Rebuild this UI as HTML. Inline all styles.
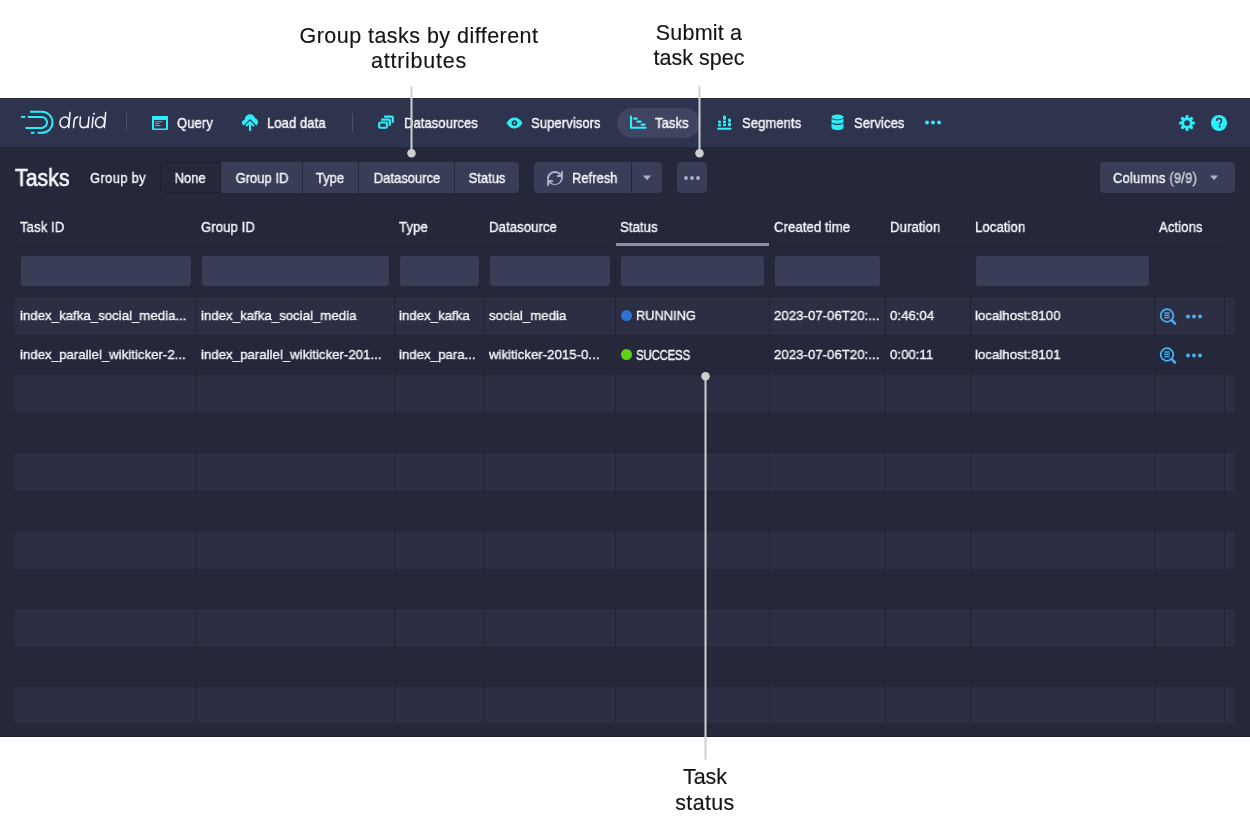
<!DOCTYPE html>
<html><head><meta charset="utf-8"><title>Druid Tasks</title>
<style>
html,body{margin:0;padding:0;}
body{width:1250px;height:840px;overflow:hidden;background:#ffffff;position:relative;font-family:"Liberation Sans", sans-serif;}
.t{position:absolute;white-space:nowrap;font-family:"Liberation Sans", sans-serif;will-change:transform;}
.r{position:absolute;display:block;}
</style></head><body>
<div class="r" style="left:0px;top:98px;width:1250px;height:639px;background:#25283b;"></div><div class="r" style="left:0px;top:98px;width:1250px;height:49px;background:#2f344e;"></div><div class="r" style="left:0px;top:98px;width:1250px;height:1px;background:#24283d;"></div><div class="r" style="left:0px;top:736px;width:1250px;height:1px;background:#1d2030;"></div><svg class="r" style="left:0px;top:0px;" width="60" height="140" viewBox="0 0 60 140"><g fill="none" stroke="#2ceefb" stroke-width="2" stroke-linecap="butt">
<path d="M30 111.8 H42 A10.5 10.5 0 0 1 42 132.8 H37.5"/>
<path d="M31 132.8 H34.5"/>
<path d="M27.8 116.9 H41.5 A5.5 5.5 0 0 1 41.5 127.9 H25.5"/>
<path d="M21 116.9 H25.3"/>
</g></svg><svg class="r" style="left:0px;top:0px;" width="120" height="140" viewBox="0 0 120 140"><g fill="none" stroke="#f0f2f5" stroke-width="1.55" stroke-linecap="round" transform="translate(9.9,0) skewX(-5)">
<ellipse cx="65.4" cy="122.3" rx="4.6" ry="5.3"/>
<path d="M70 112.6 V127.6"/>
<path d="M74.8 127.6 V121.5 Q74.8 117.1 78.2 117.1"/>
<path d="M80.8 117 V123 Q80.8 127.6 85 127.6 Q89.3 127.6 89.3 123 V117 M89.3 122 V127.6"/>
<path d="M93.4 117 V127.6"/>
<ellipse cx="100.9" cy="122.3" rx="4.6" ry="5.3"/>
<path d="M105.6 112.6 V127.6"/>
</g>
<circle cx="94" cy="113.8" r="1.05" fill="#f0f2f5"/></svg><div class="r" style="left:126px;top:113px;width:1px;height:19px;background:#4a4f69;"></div><div class="r" style="left:352px;top:113px;width:1px;height:19px;background:#4a4f69;"></div><div class="r" style="left:617px;top:107.5px;width:83px;height:30.0px;background:#3f4461;border-radius:15px;"></div><div class="t" style="top:115.50px;font-size:14.30px;line-height:14.30px;color:#f5f8fa;font-weight:400;left:177.00px;transform-origin:0 0;transform:scaleX(0.9091);letter-spacing:0.1px;-webkit-text-stroke:0.4px #f5f8fa;">Query</div><div class="t" style="top:115.50px;font-size:14.30px;line-height:14.30px;color:#f5f8fa;font-weight:400;left:267.00px;transform-origin:0 0;transform:scaleX(0.9091);letter-spacing:0.1px;-webkit-text-stroke:0.4px #f5f8fa;">Load data</div><div class="t" style="top:115.50px;font-size:14.30px;line-height:14.30px;color:#f5f8fa;font-weight:400;left:403.60px;transform-origin:0 0;transform:scaleX(0.9091);letter-spacing:0.1px;-webkit-text-stroke:0.4px #f5f8fa;">Datasources</div><div class="t" style="top:115.50px;font-size:14.30px;line-height:14.30px;color:#f5f8fa;font-weight:400;left:531.00px;transform-origin:0 0;transform:scaleX(0.9091);letter-spacing:0.1px;-webkit-text-stroke:0.4px #f5f8fa;">Supervisors</div><div class="t" style="top:115.50px;font-size:14.30px;line-height:14.30px;color:#f5f8fa;font-weight:400;left:655.00px;transform-origin:0 0;transform:scaleX(0.9091);letter-spacing:0.1px;-webkit-text-stroke:0.4px #f5f8fa;">Tasks</div><div class="t" style="top:115.50px;font-size:14.30px;line-height:14.30px;color:#f5f8fa;font-weight:400;left:741.60px;transform-origin:0 0;transform:scaleX(0.9091);letter-spacing:0.1px;-webkit-text-stroke:0.4px #f5f8fa;">Segments</div><div class="t" style="top:115.50px;font-size:14.30px;line-height:14.30px;color:#f5f8fa;font-weight:400;left:853.80px;transform-origin:0 0;transform:scaleX(0.9091);letter-spacing:0.1px;-webkit-text-stroke:0.4px #f5f8fa;">Services</div><svg class="r" style="left:152px;top:114.5px;" width="16" height="16" viewBox="0 0 16 16"><g fill="#2ceefb"><path fill-rule="evenodd" d="M1.2 1h13.6c.7 0 1.2.5 1.2 1.2v11.6c0 .7-.5 1.2-1.2 1.2H1.2C.5 15 0 14.5 0 13.8V2.2C0 1.5.5 1 1.2 1zM2 5v8.4h12V5z"/><rect x="3" y="6.2" width="7.5" height="1" opacity=".8"/><rect x="3" y="8.2" width="4.5" height="1" opacity=".8"/><rect x="3" y="10.2" width="5.5" height="1" opacity=".8"/></g></svg><svg class="r" style="left:242px;top:114px;" width="16" height="17" viewBox="0 0 16 17"><path fill="#2ceefb" d="M1.6 11.5 C0.6 11 0 10 0 8.8 C0 7.3 1.1 6 2.6 5.7 C2.9 2.9 5.1 0.2 8.2 0.2 C10.7 0.2 12.6 1.9 13.1 4.2 C14.8 4.6 16 6.1 16 8 C16 9.5 15.4 10.8 14.4 11.5 L8 5.1 Z"/><g fill="none" stroke="#2ceefb" stroke-width="2.1" stroke-linecap="round" stroke-linejoin="round"><path d="M4.6 11.4 L8 8 L11.4 11.4"/><path d="M8 8.5 V16"/></g></svg><svg class="r" style="left:377px;top:114px;" width="18" height="16" viewBox="0 0 18 16"><g fill="none" stroke="#2ceefb" stroke-width="2.2" stroke-linejoin="round"><rect x="2.2" y="8.5" width="7.8" height="5.25" rx="1.3"/><path d="M4.1 5.6 H11.4 Q12.8 5.6 12.8 7 V11.8"/><path d="M7.1 2.7 H14.4 Q15.8 2.7 15.8 4.1 V8.8"/></g></svg><svg class="r" style="left:505.5px;top:114.5px;" width="17" height="16" viewBox="0 0 17 16"><path fill="#2ceefb" fill-rule="evenodd" d="M0.5 8 C2.5 4.6 5.2 2.6 8.5 2.6 S14.5 4.6 16.5 8 C14.5 11.4 11.8 13.4 8.5 13.4 S2.5 11.4 0.5 8z M8.5 5.2 A2.8 2.8 0 1 0 8.5 10.8 A2.8 2.8 0 1 0 8.5 5.2z"/><circle cx="8.5" cy="8" r="1.1" fill="#2ceefb"/></svg><svg class="r" style="left:629px;top:115px;" width="18" height="15" viewBox="0 0 18 15"><g stroke="#2ceefb" stroke-linecap="round" fill="none"><path d="M2 1.6 V12.7 H16.6" stroke-width="2.1" stroke-linejoin="round"/><path d="M5 3.6 H7.8 M8.3 6.6 H11.6 M12.6 9.6 H15.6" stroke-width="2.1"/></g></svg><svg class="r" style="left:716px;top:114px;" width="17" height="17" viewBox="0 0 17 17"><g fill="#2ceefb"><rect x="1" y="13.7" width="14.6" height="2" rx="1"/><rect x="2" y="6.4" width="3" height="3" rx="1.3"/><rect x="2" y="9.8" width="3" height="2.7" rx="1"/><rect x="7" y="1.5" width="3" height="4.4" rx="1.3"/><rect x="7" y="6.5" width="3" height="2.6" rx=".4"/><rect x="7" y="9.6" width="3" height="2.7" rx="1"/><rect x="12" y="4.5" width="3" height="3.5" rx="1.3"/><rect x="12" y="8.5" width="3" height="3.8" rx="1"/></g></svg><svg class="r" style="left:830.5px;top:114px;" width="13" height="17" viewBox="0 0 13 17"><g fill="#2ceefb"><ellipse cx="6.5" cy="3" rx="6" ry="2.6"/><path d="M.5 4.4 C1.5 5.6 4 6.2 6.5 6.2 S11.5 5.6 12.5 4.4 V7.8 C12.5 9 9.8 9.8 6.5 9.8 S.5 9 .5 7.8z"/><path d="M.5 9.3 C1.5 10.5 4 11.1 6.5 11.1 S11.5 10.5 12.5 9.3 V13.6 C12.5 15 9.8 16.2 6.5 16.2 S.5 15 .5 13.6z"/></g></svg><svg class="r" style="left:923px;top:118px;" width="20" height="9" viewBox="0 0 20 9"><g fill="#2ceefb"><circle cx="4" cy="4.6" r="2"/><circle cx="10" cy="4.6" r="2"/><circle cx="16" cy="4.6" r="2"/></g></svg><svg class="r" style="left:1179px;top:114.5px;" width="16" height="16" viewBox="0 0 16 16"><g fill="#2ceefb"><circle cx="8" cy="8" r="5.7"/><rect x="6.5" y="0.1" width="3" height="15.8" rx="1" transform="rotate(0 8 8)"/><rect x="6.5" y="0.1" width="3" height="15.8" rx="1" transform="rotate(45 8 8)"/><rect x="6.5" y="0.1" width="3" height="15.8" rx="1" transform="rotate(90 8 8)"/><rect x="6.5" y="0.1" width="3" height="15.8" rx="1" transform="rotate(135 8 8)"/></g><circle cx="8" cy="8" r="2.85" fill="#2f344e"/></svg><svg class="r" style="left:1211px;top:114.5px;" width="16" height="16" viewBox="0 0 16 16"><circle cx="8" cy="8" r="8" fill="#2ceefb"/><path d="M5.6 6.1 C5.6 4.6 6.6 3.6 8.1 3.6 C9.6 3.6 10.5 4.6 10.5 5.8 C10.5 7.4 8.7 7.6 8.7 9.4" fill="none" stroke="#2f344e" stroke-width="1.5"/><circle cx="8.65" cy="11.6" r="1" fill="#2f344e"/></svg><div class="t" style="top:167.48px;font-size:23.30px;line-height:23.30px;color:#f5f8fa;font-weight:400;left:15.00px;transform-origin:0 0;transform:scaleX(0.9150);-webkit-text-stroke:0.6px #f5f8fa;">Tasks</div><div class="t" style="top:170.50px;font-size:14.30px;line-height:14.30px;color:#f5f8fa;font-weight:400;left:89.60px;transform-origin:0 0;transform:scaleX(0.9091);letter-spacing:0.35px;-webkit-text-stroke:0.35px #f5f8fa;">Group by</div><div class="r" style="left:160px;top:162px;width:359px;height:31px;background:#393d58;border-radius:4px;"></div><div class="r" style="left:160px;top:162px;width:61px;height:31px;background:#25283b;border-radius:4px 0 0 4px;box-shadow:inset 0 0 0 1px #1e2131;"></div><div class="r" style="left:302px;top:162px;width:1px;height:31px;background:#25283b;"></div><div class="r" style="left:358px;top:162px;width:1px;height:31px;background:#25283b;"></div><div class="r" style="left:454px;top:162px;width:1px;height:31px;background:#25283b;"></div><div class="t" style="top:170.50px;font-size:14.30px;line-height:14.30px;color:#f5f8fa;font-weight:400;left:-109.60px;width:600px;text-align:center;transform-origin:50% 0;transform:scaleX(0.9091);-webkit-text-stroke:0.35px #f5f8fa;">None</div><div class="t" style="top:170.50px;font-size:14.30px;line-height:14.30px;color:#f5f8fa;font-weight:400;left:-38.50px;width:600px;text-align:center;transform-origin:50% 0;transform:scaleX(0.9091);-webkit-text-stroke:0.35px #f5f8fa;">Group ID</div><div class="t" style="top:170.50px;font-size:14.30px;line-height:14.30px;color:#f5f8fa;font-weight:400;left:30.00px;width:600px;text-align:center;transform-origin:50% 0;transform:scaleX(0.9091);-webkit-text-stroke:0.35px #f5f8fa;">Type</div><div class="t" style="top:170.50px;font-size:14.30px;line-height:14.30px;color:#f5f8fa;font-weight:400;left:106.80px;width:600px;text-align:center;transform-origin:50% 0;transform:scaleX(0.9091);-webkit-text-stroke:0.35px #f5f8fa;">Datasource</div><div class="t" style="top:170.50px;font-size:14.30px;line-height:14.30px;color:#f5f8fa;font-weight:400;left:187.00px;width:600px;text-align:center;transform-origin:50% 0;transform:scaleX(0.9091);-webkit-text-stroke:0.35px #f5f8fa;">Status</div><div class="r" style="left:534px;top:162px;width:128px;height:31px;background:#393d58;border-radius:4px;"></div><div class="r" style="left:631px;top:162px;width:1px;height:31px;background:#25283b;"></div><svg class="r" style="left:547px;top:169.5px;" width="16" height="16" viewBox="0 0 16 16"><path fill="#abb3cc" d="M14.99 6.99c-.55 0-1 .45-1 1 0 3.31-2.69 6-6 6-1.77 0-3.36-.78-4.46-2h1.46c.55 0 1-.45 1-1s-.45-1-1-1h-4c-.55 0-1 .45-1 1v4c0 .55.45 1 1 1s1-.45 1-1v-1.98C3.84 14.24 5.8 15 7.99 15c4.42 0 8-3.58 8-8 0-.55-.45-1-1-1zm0-6c-.55 0-1 .45-1 1v1.98C12.14 1.76 10.18 1 7.99 1c-4.42 0-8 3.58-8 8 0 .55.45 1 1 1s1-.45 1-1c0-3.31 2.69-6 6-6 1.77 0 3.36.78 4.46 2h-1.46c-.55 0-1 .45-1 1s.45 1 1 1h4c.55 0 1-.45 1-1v-4c0-.55-.45-1-1-1z"/></svg><div class="t" style="top:170.50px;font-size:14.30px;line-height:14.30px;color:#f5f8fa;font-weight:400;left:572.20px;transform-origin:0 0;transform:scaleX(0.9091);-webkit-text-stroke:0.35px #f5f8fa;">Refresh</div><svg class="r" style="left:642px;top:174px;" width="10" height="8" viewBox="0 0 10 8"><path d="M1 1.5 H9 L5 6.2z" fill="#abb3cc"/></svg><div class="r" style="left:677px;top:162px;width:30px;height:31px;background:#393d58;border-radius:4px;"></div><svg class="r" style="left:682px;top:173px;" width="20" height="10" viewBox="0 0 20 10"><g fill="#abb3cc"><circle cx="4" cy="5" r="1.9"/><circle cx="10" cy="5" r="1.9"/><circle cx="16" cy="5" r="1.9"/></g></svg><div class="r" style="left:1100px;top:162px;width:135px;height:31px;background:#393d58;border-radius:4px;"></div><div class="t" style="top:170.50px;font-size:14.30px;line-height:14.30px;color:#f5f8fa;font-weight:400;left:1113.30px;transform-origin:0 0;transform:scaleX(0.9091);letter-spacing:0.2px;-webkit-text-stroke:0.35px #f5f8fa;">Columns <span style="color:#a7acc2">(9/9)</span></div><svg class="r" style="left:1209px;top:174px;" width="10" height="8" viewBox="0 0 10 8"><path d="M1 1.5 H9 L5 6.2z" fill="#abb3cc"/></svg><div class="r" style="left:15px;top:297px;width:1220px;height:38px;background:#2c2f43;"></div><div class="r" style="left:15px;top:296px;width:1220px;height:1px;background:#222538;"></div><div class="r" style="left:15px;top:335px;width:1220px;height:1px;background:#222538;"></div><div class="r" style="left:15px;top:375px;width:1220px;height:38px;background:#2c2f43;"></div><div class="r" style="left:15px;top:374px;width:1220px;height:1px;background:#222538;"></div><div class="r" style="left:15px;top:413px;width:1220px;height:1px;background:#222538;"></div><div class="r" style="left:15px;top:453px;width:1220px;height:38px;background:#2c2f43;"></div><div class="r" style="left:15px;top:452px;width:1220px;height:1px;background:#222538;"></div><div class="r" style="left:15px;top:491px;width:1220px;height:1px;background:#222538;"></div><div class="r" style="left:15px;top:531px;width:1220px;height:38px;background:#2c2f43;"></div><div class="r" style="left:15px;top:530px;width:1220px;height:1px;background:#222538;"></div><div class="r" style="left:15px;top:569px;width:1220px;height:1px;background:#222538;"></div><div class="r" style="left:15px;top:609px;width:1220px;height:38px;background:#2c2f43;"></div><div class="r" style="left:15px;top:608px;width:1220px;height:1px;background:#222538;"></div><div class="r" style="left:15px;top:647px;width:1220px;height:1px;background:#222538;"></div><div class="r" style="left:15px;top:687px;width:1220px;height:36px;background:#2c2f43;"></div><div class="r" style="left:15px;top:686px;width:1220px;height:1px;background:#222538;"></div><div class="r" style="left:15px;top:246px;width:1220px;height:1px;background:#222537;"></div><div class="r" style="left:196px;top:207px;width:1px;height:516px;background:#212436;"></div><div class="r" style="left:394px;top:207px;width:1px;height:516px;background:#212436;"></div><div class="r" style="left:484px;top:207px;width:1px;height:516px;background:#212436;"></div><div class="r" style="left:615px;top:207px;width:1px;height:516px;background:#212436;"></div><div class="r" style="left:769px;top:207px;width:1px;height:516px;background:#212436;"></div><div class="r" style="left:885px;top:207px;width:1px;height:516px;background:#212436;"></div><div class="r" style="left:970px;top:207px;width:1px;height:516px;background:#212436;"></div><div class="r" style="left:1154px;top:207px;width:1px;height:516px;background:#212436;"></div><div class="r" style="left:1224px;top:207px;width:1px;height:516px;background:#212436;"></div><div class="r" style="left:616px;top:243px;width:153px;height:3px;background:#8b8fab;"></div><div class="t" style="top:219.82px;font-size:14.04px;line-height:14.04px;color:#f5f8fa;font-weight:400;left:20.30px;transform-origin:0 0;transform:scaleX(0.9350);letter-spacing:0.1px;-webkit-text-stroke:0.35px #f5f8fa;">Task ID</div><div class="t" style="top:219.82px;font-size:14.04px;line-height:14.04px;color:#f5f8fa;font-weight:400;left:201.30px;transform-origin:0 0;transform:scaleX(0.9350);letter-spacing:0.1px;-webkit-text-stroke:0.35px #f5f8fa;">Group ID</div><div class="t" style="top:219.82px;font-size:14.04px;line-height:14.04px;color:#f5f8fa;font-weight:400;left:399.30px;transform-origin:0 0;transform:scaleX(0.9350);letter-spacing:0.1px;-webkit-text-stroke:0.35px #f5f8fa;">Type</div><div class="t" style="top:219.82px;font-size:14.04px;line-height:14.04px;color:#f5f8fa;font-weight:400;left:489.30px;transform-origin:0 0;transform:scaleX(0.9350);letter-spacing:0.1px;-webkit-text-stroke:0.35px #f5f8fa;">Datasource</div><div class="t" style="top:219.82px;font-size:14.04px;line-height:14.04px;color:#f5f8fa;font-weight:400;left:620.30px;transform-origin:0 0;transform:scaleX(0.9350);letter-spacing:0.1px;-webkit-text-stroke:0.35px #f5f8fa;">Status</div><div class="t" style="top:219.82px;font-size:14.04px;line-height:14.04px;color:#f5f8fa;font-weight:400;left:774.30px;transform-origin:0 0;transform:scaleX(0.9350);letter-spacing:0.1px;-webkit-text-stroke:0.35px #f5f8fa;">Created time</div><div class="t" style="top:219.82px;font-size:14.04px;line-height:14.04px;color:#f5f8fa;font-weight:400;left:890.30px;transform-origin:0 0;transform:scaleX(0.9350);letter-spacing:0.1px;-webkit-text-stroke:0.35px #f5f8fa;">Duration</div><div class="t" style="top:219.82px;font-size:14.04px;line-height:14.04px;color:#f5f8fa;font-weight:400;left:975.30px;transform-origin:0 0;transform:scaleX(0.9350);letter-spacing:0.1px;-webkit-text-stroke:0.35px #f5f8fa;">Location</div><div class="t" style="top:219.82px;font-size:14.04px;line-height:14.04px;color:#f5f8fa;font-weight:400;left:1159.30px;transform-origin:0 0;transform:scaleX(0.9350);letter-spacing:0.1px;-webkit-text-stroke:0.35px #f5f8fa;">Actions</div><div class="r" style="left:20.5px;top:256px;width:170.0px;height:29.5px;background:#393d58;border-radius:3px;"></div><div class="r" style="left:201.5px;top:256px;width:187.0px;height:29.5px;background:#393d58;border-radius:3px;"></div><div class="r" style="left:399.5px;top:256px;width:79.0px;height:29.5px;background:#393d58;border-radius:3px;"></div><div class="r" style="left:489.5px;top:256px;width:120.0px;height:29.5px;background:#393d58;border-radius:3px;"></div><div class="r" style="left:620.5px;top:256px;width:143.0px;height:29.5px;background:#393d58;border-radius:3px;"></div><div class="r" style="left:774.5px;top:256px;width:105.0px;height:29.5px;background:#393d58;border-radius:3px;"></div><div class="r" style="left:975.5px;top:256px;width:173.0px;height:29.5px;background:#393d58;border-radius:3px;"></div><div class="t" style="top:309.25px;font-size:13.65px;line-height:13.65px;color:#f5f8fa;font-weight:400;left:20.30px;transform-origin:0 0;transform:scaleX(0.9714);-webkit-text-stroke:0.35px #f5f8fa;">index_kafka_social_media...</div><div class="t" style="top:309.25px;font-size:13.65px;line-height:13.65px;color:#f5f8fa;font-weight:400;left:201.30px;transform-origin:0 0;transform:scaleX(0.9714);-webkit-text-stroke:0.35px #f5f8fa;">index_kafka_social_media</div><div class="t" style="top:309.25px;font-size:13.65px;line-height:13.65px;color:#f5f8fa;font-weight:400;left:399.30px;transform-origin:0 0;transform:scaleX(0.9714);-webkit-text-stroke:0.35px #f5f8fa;">index_kafka</div><div class="t" style="top:309.25px;font-size:13.65px;line-height:13.65px;color:#f5f8fa;font-weight:400;left:489.30px;transform-origin:0 0;transform:scaleX(0.9714);-webkit-text-stroke:0.35px #f5f8fa;">social_media</div><div class="r" style="left:621.1px;top:309.7px;width:11px;height:11px;border-radius:50%;background:#2d72d2"></div><div class="t" style="top:309.25px;font-size:13.65px;line-height:13.65px;color:#f5f8fa;font-weight:400;left:636.20px;transform-origin:0 0;transform:scaleX(0.9400);-webkit-text-stroke:0.35px #f5f8fa;">RUNNING</div><div class="t" style="top:309.25px;font-size:13.65px;line-height:13.65px;color:#f5f8fa;font-weight:400;left:774.30px;transform-origin:0 0;transform:scaleX(0.9714);-webkit-text-stroke:0.35px #f5f8fa;">2023-07-06T20:...</div><div class="t" style="top:309.25px;font-size:13.65px;line-height:13.65px;color:#f5f8fa;font-weight:400;left:890.30px;transform-origin:0 0;transform:scaleX(0.9714);-webkit-text-stroke:0.35px #f5f8fa;">0:46:04</div><div class="t" style="top:309.25px;font-size:13.65px;line-height:13.65px;color:#f5f8fa;font-weight:400;left:975.30px;transform-origin:0 0;transform:scaleX(0.9714);-webkit-text-stroke:0.35px #f5f8fa;">localhost:8100</div><svg class="r" style="left:1158px;top:305.8px;" width="20" height="20" viewBox="0 0 20 20"><g fill="none" stroke="#48aff0"><circle cx="9" cy="9.5" r="6.3" stroke-width="1.8"/><path d="M13.6 14.1 L17 17.5" stroke-width="2.6" stroke-linecap="round"/></g><g fill="#48aff0"><rect x="6.3" y="6.3" width="5.4" height="1.4"/><rect x="6.3" y="8.6" width="5.4" height="1.4"/><rect x="6.3" y="10.9" width="5.4" height="1.4"/></g></svg><svg class="r" style="left:1183px;top:312px;" width="20" height="9" viewBox="0 0 20 9"><g fill="#48aff0"><circle cx="5" cy="4.6" r="2"/><circle cx="11" cy="4.6" r="2"/><circle cx="17" cy="4.6" r="2"/></g></svg><div class="t" style="top:348.25px;font-size:13.65px;line-height:13.65px;color:#f5f8fa;font-weight:400;left:20.30px;transform-origin:0 0;transform:scaleX(0.9714);-webkit-text-stroke:0.35px #f5f8fa;">index_parallel_wikiticker-2...</div><div class="t" style="top:348.25px;font-size:13.65px;line-height:13.65px;color:#f5f8fa;font-weight:400;left:201.30px;transform-origin:0 0;transform:scaleX(0.9714);-webkit-text-stroke:0.35px #f5f8fa;">index_parallel_wikiticker-201...</div><div class="t" style="top:348.25px;font-size:13.65px;line-height:13.65px;color:#f5f8fa;font-weight:400;left:399.30px;transform-origin:0 0;transform:scaleX(0.9714);-webkit-text-stroke:0.35px #f5f8fa;">index_para...</div><div class="t" style="top:348.25px;font-size:13.65px;line-height:13.65px;color:#f5f8fa;font-weight:400;left:489.30px;transform-origin:0 0;transform:scaleX(0.9714);-webkit-text-stroke:0.35px #f5f8fa;">wikiticker-2015-0...</div><div class="r" style="left:621.1px;top:348.7px;width:11px;height:11px;border-radius:50%;background:#5ed212"></div><div class="t" style="top:347.92px;font-size:14.04px;line-height:14.04px;color:#f5f8fa;font-weight:400;left:636.20px;transform-origin:0 0;transform:scaleX(0.8200);letter-spacing:-0.3px;-webkit-text-stroke:0.35px #f5f8fa;">SUCCESS</div><div class="t" style="top:348.25px;font-size:13.65px;line-height:13.65px;color:#f5f8fa;font-weight:400;left:774.30px;transform-origin:0 0;transform:scaleX(0.9714);-webkit-text-stroke:0.35px #f5f8fa;">2023-07-06T20:...</div><div class="t" style="top:348.25px;font-size:13.65px;line-height:13.65px;color:#f5f8fa;font-weight:400;left:890.30px;transform-origin:0 0;transform:scaleX(0.9714);-webkit-text-stroke:0.35px #f5f8fa;">0:00:11</div><div class="t" style="top:348.25px;font-size:13.65px;line-height:13.65px;color:#f5f8fa;font-weight:400;left:975.30px;transform-origin:0 0;transform:scaleX(0.9714);-webkit-text-stroke:0.35px #f5f8fa;">localhost:8101</div><svg class="r" style="left:1158px;top:344.8px;" width="20" height="20" viewBox="0 0 20 20"><g fill="none" stroke="#48aff0"><circle cx="9" cy="9.5" r="6.3" stroke-width="1.8"/><path d="M13.6 14.1 L17 17.5" stroke-width="2.6" stroke-linecap="round"/></g><g fill="#48aff0"><rect x="6.3" y="6.3" width="5.4" height="1.4"/><rect x="6.3" y="8.6" width="5.4" height="1.4"/><rect x="6.3" y="10.9" width="5.4" height="1.4"/></g></svg><svg class="r" style="left:1183px;top:351px;" width="20" height="9" viewBox="0 0 20 9"><g fill="#48aff0"><circle cx="5" cy="4.6" r="2"/><circle cx="11" cy="4.6" r="2"/><circle cx="17" cy="4.6" r="2"/></g></svg><div class="t" style="top:25.80px;font-size:21.50px;line-height:21.50px;color:#141414;font-weight:400;left:119.23px;width:600px;text-align:center;transform-origin:50% 0;letter-spacing:0.462px;-webkit-text-stroke:0.15px #141414;">Group tasks by different</div><div class="t" style="top:51.40px;font-size:21.50px;line-height:21.50px;color:#141414;font-weight:400;left:119.37px;width:600px;text-align:center;transform-origin:50% 0;letter-spacing:0.733px;-webkit-text-stroke:0.15px #141414;">attributes</div><div class="t" style="top:22.80px;font-size:21.50px;line-height:21.50px;color:#141414;font-weight:400;left:399.29px;width:600px;text-align:center;transform-origin:50% 0;letter-spacing:0.185px;-webkit-text-stroke:0.15px #141414;">Submit a</div><div class="t" style="top:48.30px;font-size:21.50px;line-height:21.50px;color:#141414;font-weight:400;left:399.40px;width:600px;text-align:center;transform-origin:50% 0;letter-spacing:-0.004px;-webkit-text-stroke:0.15px #141414;">task spec</div><div class="t" style="top:767.00px;font-size:21.50px;line-height:21.50px;color:#141414;font-weight:400;left:405.16px;width:600px;text-align:center;transform-origin:50% 0;letter-spacing:-0.071px;-webkit-text-stroke:0.15px #141414;">Task</div><div class="t" style="top:792.60px;font-size:21.50px;line-height:21.50px;color:#141414;font-weight:400;left:405.17px;width:600px;text-align:center;transform-origin:50% 0;letter-spacing:0.349px;-webkit-text-stroke:0.15px #141414;">status</div><svg class="r" style="left:0px;top:0px;pointer-events:none;" width="1250" height="840" viewBox="0 0 1250 840"><rect x="410.5" y="86.2" width="2" height="66.8" fill="#cfcfcf"/><circle cx="411.5" cy="153.2" r="4.25" fill="#cfcfcf"/></svg><svg class="r" style="left:0px;top:0px;pointer-events:none;" width="1250" height="840" viewBox="0 0 1250 840"><rect x="698.5" y="85.8" width="2" height="67.2" fill="#cfcfcf"/><circle cx="699.5" cy="153.2" r="4.25" fill="#cfcfcf"/></svg><svg class="r" style="left:0px;top:0px;pointer-events:none;" width="1250" height="840" viewBox="0 0 1250 840"><rect x="704.5" y="376.3" width="2" height="383.3" fill="#cfcfcf"/><circle cx="705.5" cy="376.3" r="4.25" fill="#cfcfcf"/></svg>
</body></html>
